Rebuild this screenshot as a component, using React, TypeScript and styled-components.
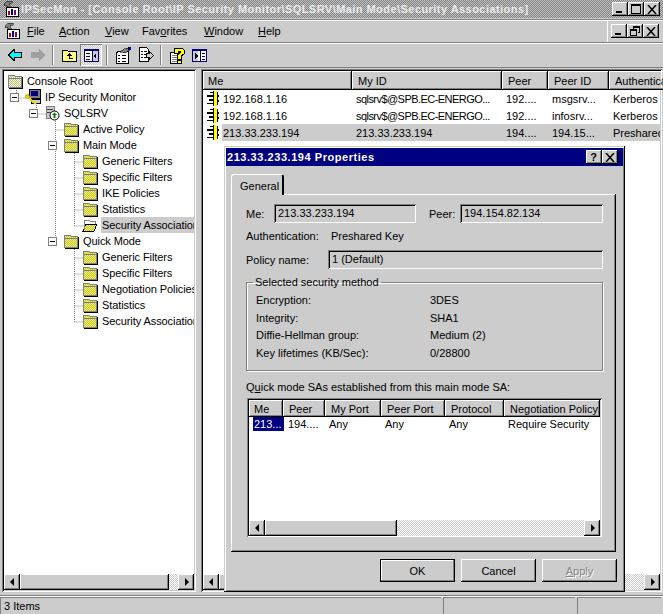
import { useId } from "react";
import styled, { createGlobalStyle, css } from "styled-components";

const GlobalStyle = createGlobalStyle`
  * { box-sizing: border-box; }
  html, body { margin: 0; padding: 0; background: #ccc; }
  body { font: 11px "Liberation Sans", Arial, sans-serif; color: #000; }
`;

const dither = (a: string, b: string) => css`
  background: repeating-conic-gradient(${a} 0 25%, ${b} 0 50%) 0 0 / 2px 2px;
`;

const raised = css`
  box-shadow: inset -1px -1px #000, inset 1px 1px #fff, inset -2px -2px #808080;
`;

const sunken = css`
  box-shadow: inset 1px 1px #808080, inset -1px -1px #fff, inset 2px 2px #000,
    inset -2px -2px #ccc;
`;

/* ---------- icons ---------- */

function Folder({ faded, open }: { faded?: boolean; open?: boolean }) {
  const id = useId();
  const fill = `url(#${id})`;
  return (
    <svg width="16" height="16" viewBox="0 0 16 16" shapeRendering="crispEdges">
      <defs>
        <pattern id={id} width="2" height="2" patternUnits="userSpaceOnUse">
          <rect width="2" height="2" fill={faded ? "#ffffc0" : "#ffff00"} />
          <rect width="1" height="1" fill="#b8b8a0" />
          <rect x="1" y="1" width="1" height="1" fill="#b8b8a0" />
        </pattern>
      </defs>
      {open ? (
        <>
          <path d="M2 3h5l1 1h5v3H2z" fill="#fff" stroke="#808080" />
          <path d="M4 7h11l-3 7H1z" fill={fill} stroke="#000" strokeWidth="1" />
          <path d="M2 13V4" stroke="#808080" />
        </>
      ) : (
        <>
          <path d="M2 2h5l1 1h6v2H1V3z" fill={fill} stroke="#808080" />
          <rect x="1" y="5" width="13" height="9" fill={fill} stroke="#808080" />
          <path d="M15 4v11H2" stroke="#000" fill="none" />
        </>
      )}
    </svg>
  );
}

function MmcIcon() {
  return (
    <svg width="16" height="16" viewBox="0 0 16 16" shapeRendering="crispEdges">
      <path d="M1 3l3-3h5v2H6v3L4 6 3 4 1 5z" fill="#808080" stroke="#000" strokeWidth=".5" />
      <rect x="5" y="5" width="3" height="9" fill="#8b5a2b" />
      <rect x="3" y="6" width="12" height="9" fill="#fff" stroke="#000" />
      <rect x="5" y="10" width="2" height="4" fill="#c00000" />
      <rect x="8" y="8" width="2" height="6" fill="#000080" />
      <rect x="11" y="9" width="2" height="5" fill="#800080" />
    </svg>
  );
}

function MonitorKey() {
  return (
    <svg width="16" height="17" viewBox="0 0 16 17">
      <rect x="4" y="0" width="11" height="9" fill="#808080" stroke="#000" shapeRendering="crispEdges" />
      <rect x="6" y="2" width="7" height="5" fill="#000080" shapeRendering="crispEdges" />
      <rect x="6" y="10" width="9" height="4" fill="#ccc" stroke="#000" shapeRendering="crispEdges" />
      <path d="M1 7l3 1 2 3 5 4" stroke="#f0d800" strokeWidth="2" fill="none" />
      <circle cx="2.5" cy="7.5" r="2" fill="#f0d800" stroke="#806000" strokeWidth=".5" />
    </svg>
  );
}

function ServerIcon() {
  return (
    <svg width="16" height="16" viewBox="0 0 16 16">
      <rect x="2" y="1" width="8" height="12" fill="#ccc" stroke="#808080" shapeRendering="crispEdges" />
      <path d="M3 4h6M3 7h6" stroke="#404040" shapeRendering="crispEdges" />
      <circle cx="10.5" cy="10.5" r="4.5" fill="#fff" stroke="#000" />
      <path d="M10.5 7.5l2.5 2.5h-1.5v3h-2v-3H8z" fill="#008000" />
    </svg>
  );
}

function SaIcon() {
  return (
    <svg width="12" height="15" viewBox="0 0 12 15" shapeRendering="crispEdges">
      <path d="M7 0h3v15H7z" fill="#ffff00" />
      <path d="M6 0h1v15H6zM10 1h1v13h-1z" fill="#000" />
      <path d="M3 1h3v1H3zM0 4h6v2H0zM2 8h4v2H2zM0 12h6v1H0zM11 4h1v2h-1zM11 9h1v2h-1z" fill="#000" />
    </svg>
  );
}

function BackIcon({ disabled }: { disabled?: boolean }) {
  return (
    <svg width="14" height="12" viewBox="0 0 14 12" shapeRendering="crispEdges">
      {disabled ? (
        <path d="M8 0l6 6-6 6V9H0V3h8z" fill="#a0a0a0" stroke="none" />
      ) : (
        <path d="M6 .5L.5 6 6 11.5V8.5h7.5v-5H6z" fill="#00ffff" stroke="#000" />
      )}
    </svg>
  );
}

function UpFolderIcon() {
  return (
    <svg width="16" height="14" viewBox="0 0 16 14" shapeRendering="crispEdges">
      <path d="M1 2h5l1 1h8v10H1z" fill="#ffff80" stroke="#000" />
      <path d="M8 5l3 3H9v2h3v1H8V8H6z" fill="#000" />
    </svg>
  );
}

function PaneIcon({ flip }: { flip?: boolean }) {
  return (
    <svg width="15" height="13" viewBox="0 0 15 13" shapeRendering="crispEdges">
      <rect x=".5" y=".5" width="14" height="12" fill="#fff" stroke="#000080" />
      <rect x="0" y="0" width="15" height="2" fill="#000080" />
      <rect x={flip ? 1 : 9} y="2" width="5" height="10" fill="#ccc" />
      <path d={flip ? "M3 4l3 3-3 3z" : "M12 4l-3 3 3 3z"} fill="#000" />
      <path
        d={flip ? "M8 2v10M10 4h3M10 7h3M10 10h3" : "M8 2v10M2 4h4M2 7h4M2 10h4"}
        stroke="#000080"
      />
    </svg>
  );
}

function PropsIcon() {
  return (
    <svg width="17" height="17" viewBox="0 0 17 17" shapeRendering="crispEdges">
      <path d="M1 6l3-2h9v12H1z" fill="#fff" stroke="#000" />
      <path d="M3 8h2M7 8h4M3 11h2M7 11h4M3 14h2M7 14h4" stroke="#000" />
      <path d="M5 5l4-3 4-1 2 2-5 3z" fill="#808080" stroke="#000" strokeWidth=".5" />
      <rect x="13" y="0" width="3" height="3" fill="#000080" />
    </svg>
  );
}

function ExportIcon() {
  return (
    <svg width="16" height="16" viewBox="0 0 16 16" shapeRendering="crispEdges">
      <path d="M1.5 .5h7l2 2v12h-9z" fill="#fff" stroke="#000" />
      <path d="M3 4h2M3 7h2M3 10h2" stroke="#000080" strokeWidth="1" />
      <path d="M6 4h3M6 7h2M6 10h2" stroke="#000" />
      <path d="M8 6.5h3V4l4.5 4.5L11 13v-2.500H8z" fill="#ccc" stroke="#000" />
    </svg>
  );
}

function HelpIcon() {
  return (
    <svg width="16" height="17" viewBox="0 0 16 17" shapeRendering="crispEdges">
      <path d="M1 5h10v11H1z" fill="#fff" stroke="#000" />
      <path d="M3 8h6M3 10h6M3 12h6M3 14h6" stroke="#808080" />
      <path
        d="M5 1h8l2 2v4l-3 2v3H8V8l3-2V4H9v2H5z"
        fill="#ffff00"
        stroke="#000"
      />
      <rect x="8" y="13" width="4" height="3" fill="#ffff00" stroke="#000" />
    </svg>
  );
}

/* ---------- main window ---------- */

const Window = styled.div`
  position: relative;
  width: 663px;
  height: 614px;
  overflow: hidden;
  background: #ccc;
  display: flex;
  flex-direction: column;
`;

const TitleBar = styled.div`
  height: 19px;
  flex: none;
  display: flex;
  align-items: center;
  padding: 0 3px 0 3px;
  ${dither("#808080", "#c4c4c4")}
  border-bottom: 1px solid #ccc;
`;

const TitleText = styled.span`
  flex: 1;
  margin-left: 2px;
  font-weight: bold;
  font-size: 11px;
  letter-spacing: 0.45px;
  color: #ececec;
  white-space: nowrap;
`;

const CaptionButton = styled.span`
  ${raised}
  width: 16px;
  height: 14px;
  background: #ccc;
  color: #000;
  display: inline-flex;
  align-items: center;
  justify-content: center;
`;

const CaptionGroup = styled.div`
  display: flex;
`;

const MenuBar = styled.div`
  height: 24px;
  flex: none;
  display: flex;
  align-items: center;
  padding: 0 4px 0 4px;
  border-top: 1px solid #808080;
  border-bottom: 1px solid #808080;
  box-shadow: inset 0 1px #fff;
`;

const MenuItem = styled.span<{ $w: number }>`
  width: ${(p) => p.$w}px;
  flex: none;
  white-space: nowrap;
`;

const MenuIconSlot = styled.span`
  width: 23px;
  height: 16px;
  flex: none;
`;

const MdiButtons = styled.div`
  margin-left: auto;
  align-self: stretch;
  display: flex;
  align-items: center;
  padding: 0 0 0 3px;
  border-left: 1px solid #fff;
`;

const ToolBar = styled.div`
  height: 25px;
  flex: none;
  display: flex;
  align-items: center;
  padding: 0 0 0 8px;
  border-bottom: 1px solid #808080;
  box-shadow: inset 0 1px #fff;
`;

const ToolButton = styled.span<{ $pressed?: boolean; $w: number }>`
  width: ${(p) => p.$w}px;
  height: 22px;
  flex: none;
  display: flex;
  align-items: center;
  ${(p) =>
    p.$pressed &&
    css`
      justify-content: center;
      ${dither("#ccc", "#eee")}
      box-shadow: inset 1px 1px #808080, inset -1px -1px #fff;
    `}
`;

const ToolSeparator = styled.span`
  width: 2px;
  height: 20px;
  flex: none;
  margin: 0 7px 0 4px;
  border-left: 1px solid #808080;
  border-right: 1px solid #fff;
`;

const Panes = styled.div`
  flex: 1;
  min-height: 0;
  display: flex;
  padding: 1px 0 3px 2px;
  gap: 5px;
  border-bottom: 1px solid #808080;
`;

const Pane = styled.div<{ $w: number }>`
  ${sunken}
  position: relative;
  width: ${(p) => p.$w}px;
  flex: none;
  background: #fff;
  padding: 2px;
  display: flex;
  flex-direction: column;
`;

/* ---------- tree ---------- */

const TreeBody = styled.div`
  flex: 1;
  min-height: 0;
  position: relative;
  overflow: hidden;
  padding-top: 2px;
`;

const TreeLines = styled.svg`
  position: absolute;
  left: -2px;
  top: -71px;
  pointer-events: none;
`;

const TreeRowWrap = styled.div<{ $level: number }>`
  position: relative;
  height: 16px;
  display: flex;
  align-items: center;
  padding-left: ${(p) => [3, 21, 40, 59, 78][p.$level]}px;
  white-space: nowrap;
`;

const TreeLabel = styled.span<{ $selected?: boolean }>`
  margin-left: 3px;
  padding: 0 1px;
  height: 16px;
  line-height: 16px;
  flex: 1;
  overflow: hidden;
  letter-spacing: -0.08px;
  background: ${(p) => (p.$selected ? "#ccc" : "transparent")};
`;

const Expander = styled.span`
  position: absolute;
  width: 9px;
  height: 9px;
  top: 4px;
  margin-left: -15px;
  background: #fff;
  border: 1px solid #808080;
  &::after {
    content: "";
    position: absolute;
    left: 1px;
    top: 3px;
    width: 5px;
    height: 1px;
    background: #000;
  }
`;

/* ---------- scroll bars ---------- */

const ScrollBarWrap = styled.div`
  height: 16px;
  flex: none;
  display: flex;
  background: #ccc;
`;

const ScrollButton = styled.span`
  ${raised}
  width: 16px;
  height: 16px;
  flex: none;
  background: #ccc;
  display: flex;
  align-items: center;
  justify-content: center;
`;

const ScrollThumb = styled.span<{ $w: number }>`
  ${raised}
  width: ${(p) => p.$w}px;
  flex: none;
  background: #ccc;
`;

const ScrollTrack = styled.span`
  flex: 1;
  ${dither("#fff", "#ccc")}
`;

const ArrowGlyph = styled.span<{ $left?: boolean }>`
  width: 0;
  height: 0;
  border-top: 4px solid transparent;
  border-bottom: 4px solid transparent;
  ${(p) =>
    p.$left
      ? "border-right: 4px solid #000; margin-left: -1px;"
      : "border-left: 4px solid #000; margin-left: 1px;"}
`;

function ScrollBar({ thumb }: { thumb: number }) {
  return (
    <ScrollBarWrap>
      <ScrollButton>
        <ArrowGlyph $left />
      </ScrollButton>
      <ScrollThumb $w={thumb} />
      <ScrollTrack />
      <ScrollButton>
        <ArrowGlyph />
      </ScrollButton>
    </ScrollBarWrap>
  );
}

/* ---------- list views ---------- */

const ListHeader = styled.div<{ $h: number }>`
  display: flex;
  flex: none;
  height: ${(p) => p.$h}px;
  line-height: ${(p) => p.$h + 1}px;
  background: #ccc;
`;

const HeaderCell = styled.div<{ $w: number }>`
  ${raised}
  width: ${(p) => p.$w}px;
  flex: none;
  padding: 0 0 0 6px;
  overflow: hidden;
  white-space: nowrap;
  &:first-child {
    padding-left: 5px;
  }
`;

const ListRow = styled.div`
  position: relative;
  height: 17px;
  display: flex;
  align-items: center;
  white-space: nowrap;
`;

const ListBody = styled.div`
  flex: 1;
  min-height: 0;
  overflow: hidden;
`;

const ListCell = styled.span<{ $w: number; $selected?: boolean; $first?: boolean; $tight?: boolean }>`
  width: ${(p) => p.$w}px;
  flex: none;
  height: 100%;
  line-height: 19px;
  padding-left: ${(p) => (p.$first ? 1 : 4)}px;
  overflow: hidden;
  letter-spacing: ${(p) => (p.$tight ? "-0.55px" : "normal")};
  background: ${(p) => (p.$selected ? "#ccc" : "transparent")};
`;

const IconCell = styled.span<{ $w: number }>`
  width: ${(p) => p.$w}px;
  flex: none;
  display: flex;
  align-items: center;
  padding-left: 4px;
`;

/* ---------- dialog ---------- */

const Dialog = styled.div`
  position: absolute;
  left: 224px;
  top: 146px;
  width: 401px;
  height: 446px;
  background: #ccc;
  padding: 2px;
  box-shadow: inset -1px -1px #000, inset 1px 1px #ccc, inset 2px 2px #fff,
    inset -2px -2px #808080;
`;

const DialogTitle = styled.div`
  height: 18px;
  background: #000080;
  color: #fff;
  font-weight: bold;
  letter-spacing: 0.55px;
  display: flex;
  align-items: center;
  padding: 0 5px 0 1px;
`;

const DialogTitleText = styled.span`
  flex: 1;
`;

const TabStrip = styled.div`
  display: flex;
  margin: 8px 0 0 5px;
  height: 20px;
`;

const Tab = styled.div`
  position: relative;
  z-index: 1;
  width: 53px;
  height: 21px;
  padding: 5px 0 0 8px;
  background: #ccc;
  border-radius: 3px 3px 0 0;
  border-left: 1px solid #fff;
  border-top: 1px solid #fff;
  border-right: 2px solid #000;
`;

const TabPage = styled.div`
  ${raised}
  width: 385px;
  height: 358px;
  margin-left: 5px;
  padding: 10px 13px 0 15px;
`;

const FieldRow = styled.div`
  display: flex;
  align-items: center;
  height: 19px;
`;

const FieldLabel = styled.span<{ $w: number; $ml?: number }>`
  width: ${(p) => p.$w}px;
  margin-left: ${(p) => p.$ml ?? 0}px;
  flex: none;
`;

const ReadOnlyField = styled.div<{ $w: number }>`
  ${sunken}
  width: ${(p) => p.$w}px;
  height: 19px;
  padding: 0 0 0 4px;
  line-height: 19px;
  flex: none;
  white-space: nowrap;
`;

const InfoRow = styled.div`
  display: flex;
  height: 16px;
  line-height: 16px;
  margin: 5px 0 6px;
`;

const GroupBox = styled.fieldset`
  margin: 6px 0 0;
  padding: 3px 0 0 9px;
  min-width: 0;
  height: 96px;
  width: 357px;
  border: 1px solid #808080;
  box-shadow: 1px 1px #fff, inset 1px 1px #fff;
`;

const GroupLegend = styled.legend`
  padding: 0 2px;
  margin-left: -3px;
  line-height: 14px;
`;

const MethodGrid = styled.div`
  display: grid;
  grid-template-columns: 174px 1fr;
  grid-auto-rows: 17.5px;
  line-height: 17.5px;
`;

const QuickLabel = styled.div`
  margin-top: 9px;
  height: 14px;
  line-height: 14px;
`;

const InnerList = styled.div`
  ${sunken}
  margin: 4px 0 0 1px;
  width: 355px;
  height: 139px;
  padding: 2px 2px 1px;
  background: #fff;
  display: flex;
  flex-direction: column;
`;

const InnerRow = styled.div`
  display: flex;
  height: 14px;
  line-height: 14px;
  white-space: nowrap;
`;

const InnerCell = styled.span<{ $w: number; $selected?: boolean }>`
  width: ${(p) => p.$w}px;
  flex: none;
  padding-left: ${(p) => (p.$selected ? 1 : 4)}px;
  overflow: hidden;
  ${(p) =>
    p.$selected &&
    css`
      background: #000080;
      color: #fff;
      margin-left: 4px;
    `}
`;

const ButtonRow = styled.div`
  display: flex;
  justify-content: flex-end;
  gap: 6px;
  margin-top: 7px;
  padding-right: 6px;
`;

const DialogButton = styled.button<{ $default?: boolean }>`
  width: 75px;
  height: 23px;
  padding: 0;
  border: none;
  background: #ccc;
  font: 11px "Liberation Sans", Arial, sans-serif;
  color: ${(p) => (p.disabled ? "#808080" : "#000")};
  text-shadow: ${(p) => (p.disabled ? "1px 1px #fff" : "none")};
  box-shadow: ${(p) =>
    p.$default
      ? "inset 0 0 0 1px #000, inset -2px -2px #808080, inset 2px 2px #fff"
      : "inset -1px -1px #000, inset 1px 1px #fff, inset -2px -2px #808080"};
`;

const StatusBar = styled.div`
  height: 18px;
  flex: none;
  display: flex;
  border-top: 1px solid #fff;
`;

const StatusCell = styled.div<{ $w?: number }>`
  width: ${(p) => (p.$w ? `${p.$w}px` : "auto")};
  flex: ${(p) => (p.$w ? "none" : 1)};
  margin-right: 2px;
  padding-left: 3px;
  line-height: 17px;
  border-top: 1px solid #808080;
  border-left: 1px solid #808080;
`;

/* ---------- data ---------- */

const treeRows: {
  label: string;
  level: number;
  icon: "root" | "monitor" | "server" | "folder" | "open";
  expander?: boolean;
  selected?: boolean;
}[] = [
  { label: "Console Root", level: 0, icon: "root" },
  { label: "IP Security Monitor", level: 1, icon: "monitor", expander: true },
  { label: "SQLSRV", level: 2, icon: "server", expander: true },
  { label: "Active Policy", level: 3, icon: "folder" },
  { label: "Main Mode", level: 3, icon: "folder", expander: true },
  { label: "Generic Filters", level: 4, icon: "folder" },
  { label: "Specific Filters", level: 4, icon: "folder" },
  { label: "IKE Policies", level: 4, icon: "folder" },
  { label: "Statistics", level: 4, icon: "folder" },
  { label: "Security Associations", level: 4, icon: "open", selected: true },
  { label: "Quick Mode", level: 3, icon: "folder", expander: true },
  { label: "Generic Filters", level: 4, icon: "folder" },
  { label: "Specific Filters", level: 4, icon: "folder" },
  { label: "Negotiation Policies", level: 4, icon: "folder" },
  { label: "Statistics", level: 4, icon: "folder" },
  { label: "Security Associations", level: 4, icon: "folder" },
];

const saColumns = [
  { title: "Me", w: 149 },
  { title: "My ID", w: 150 },
  { title: "Peer", w: 46 },
  { title: "Peer ID", w: 61 },
  { title: "Authentication", w: 60 },
];

const saRows = [
  ["192.168.1.16", "sqlsrv$@SPB.EC-ENERGO...", "192....", "msgsrv...", "Kerberos"],
  ["192.168.1.16", "sqlsrv$@SPB.EC-ENERGO...", "192....", "infosrv...", "Kerberos"],
  ["213.33.233.194", "213.33.233.194", "194....", "194.15...", "Preshared Key"],
];

const quickColumns = [
  { title: "Me", w: 34 },
  { title: "Peer", w: 42 },
  { title: "My Port", w: 56 },
  { title: "Peer Port", w: 64 },
  { title: "Protocol", w: 59 },
  { title: "Negotiation Policy", w: 96 },
];

const methodRows = [
  ["Encryption:", "3DES"],
  ["Integrity:", "SHA1"],
  ["Diffie-Hellman group:", "Medium (2)"],
  ["Key lifetimes (KB/Sec):", "0/28800"],
];

function TreeIcon({ icon }: { icon: string }) {
  if (icon === "monitor") return <MonitorKey />;
  if (icon === "server") return <ServerIcon />;
  if (icon === "open") return <Folder open />;
  return <Folder faded={icon === "root"} />;
}

const GlyphMin = () => (
  <svg width="8" height="8" viewBox="0 0 8 8" shapeRendering="crispEdges">
    <path d="M0 6h6v2H0z" fill="#000" />
  </svg>
);
const GlyphMax = () => (
  <svg width="10" height="10" viewBox="0 0 10 10" shapeRendering="crispEdges">
    <path d="M.5 .5h9v9h-9zM0 1.5h10" fill="none" stroke="#000" />
  </svg>
);
const GlyphRestore = () => (
  <svg width="10" height="10" viewBox="0 0 10 10" shapeRendering="crispEdges">
    <path d="M3.5 2.5V.5h6v6h-2M.5 3.5h6v6h-6zM.5 4.5h6M3 1.5h6" fill="none" stroke="#000" />
  </svg>
);
const GlyphClose = () => (
  <svg width="10" height="9" viewBox="0 0 10 9">
    <path d="M1 0l8 9M9 0l-8 9" stroke="#000" strokeWidth="1.5" />
  </svg>
);

export default function App() {
  return (
    <Window>
      <GlobalStyle />
      <TitleBar>
        <MmcIcon />
        <TitleText>
          IPSecMon - [Console Root\IP Security Monitor\SQLSRV\Main Mode\Security Associations]
        </TitleText>
        <CaptionGroup>
          <CaptionButton><GlyphMin /></CaptionButton>
          <CaptionButton><GlyphMax /></CaptionButton>
          <CaptionButton><GlyphClose /></CaptionButton>
        </CaptionGroup>
      </TitleBar>

      <MenuBar>
        <MenuIconSlot><MmcIcon /></MenuIconSlot>
        <MenuItem $w={32}><u>F</u>ile</MenuItem>
        <MenuItem $w={46}><u>A</u>ction</MenuItem>
        <MenuItem $w={37}><u>V</u>iew</MenuItem>
        <MenuItem $w={62}>Fav<u>o</u>rites</MenuItem>
        <MenuItem $w={54}><u>W</u>indow</MenuItem>
        <MenuItem $w={30}><u>H</u>elp</MenuItem>
        <MdiButtons>
          <CaptionButton><GlyphMin /></CaptionButton>
          <CaptionButton><GlyphRestore /></CaptionButton>
          <CaptionButton><GlyphClose /></CaptionButton>
        </MdiButtons>
      </MenuBar>

      <ToolBar>
        <ToolButton $w={23}><BackIcon /></ToolButton>
        <ToolButton $w={17}><BackIcon disabled /></ToolButton>
        <ToolSeparator />
        <ToolButton $w={19}><UpFolderIcon /></ToolButton>
        <ToolButton $pressed $w={22}><PaneIcon /></ToolButton>
        <ToolSeparator />
        <ToolButton $w={23}><PropsIcon /></ToolButton>
        <ToolButton $w={18}><ExportIcon /></ToolButton>
        <ToolSeparator />
        <ToolButton $w={23}><HelpIcon /></ToolButton>
        <ToolButton $w={23}><PaneIcon flip /></ToolButton>
      </ToolBar>

      <Panes>
        <Pane $w={194}>
          <TreeBody>
            <TreeLines width="196" height="530">
              <path
                d="M14.5 88v10M14.5 98h10M34.5 105v9M34.5 114h10M53.5 121v121M53.5 130h9M72.5 153v73M72.5 162h9M72.5 178h9M72.5 194h9M72.5 210h9M72.5 226h9M72.5 249v73M72.5 258h9M72.5 274h9M72.5 290h9M72.5 306h9M72.5 322h9"
                stroke="#808080"
                strokeDasharray="1 1"
                fill="none"
              />
            </TreeLines>
            {treeRows.map((row, i) => (
              <TreeRowWrap key={i} $level={row.level}>
                {row.expander && <Expander />}
                <TreeIcon icon={row.icon} />
                <TreeLabel $selected={row.selected}>{row.label}</TreeLabel>
              </TreeRowWrap>
            ))}
          </TreeBody>
          <ScrollBar thumb={149} />
        </Pane>

        <Pane $w={461}>
          <ListHeader $h={19}>
            {saColumns.map((c) => (
              <HeaderCell key={c.title} $w={c.w}>{c.title}</HeaderCell>
            ))}
          </ListHeader>
          <ListBody>
            {saRows.map((row, i) => (
              <ListRow key={i}>
                <IconCell $w={19}><SaIcon /></IconCell>
                {row.map((text, j) => (
                  <ListCell
                    key={j}
                    $w={j === 0 ? saColumns[0].w - 19 : saColumns[j].w}
                    $selected={i === 2}
                    $first={j === 0}
                    $tight={j === 1 && i < 2}
                  >
                    {text}
                  </ListCell>
                ))}
              </ListRow>
            ))}
          </ListBody>
          <ScrollBar thumb={200} />
        </Pane>
      </Panes>

      <StatusBar>
        <StatusCell $w={441}>3 Items</StatusCell>
        <StatusCell $w={132} />
        <StatusCell />
      </StatusBar>

      <Dialog>
        <DialogTitle>
          <DialogTitleText>213.33.233.194 Properties</DialogTitleText>
          <CaptionButton>?</CaptionButton>
          <CaptionButton><GlyphClose /></CaptionButton>
        </DialogTitle>
        <TabStrip>
          <Tab>General</Tab>
        </TabStrip>
        <TabPage>
          <FieldRow>
            <FieldLabel $w={28}>Me:</FieldLabel>
            <ReadOnlyField $w={142}>213.33.233.194</ReadOnlyField>
            <FieldLabel $w={31} $ml={13}>Peer:</FieldLabel>
            <ReadOnlyField $w={143}>194.154.82.134</ReadOnlyField>
          </FieldRow>
          <InfoRow>
            <FieldLabel $w={85}>Authentication:</FieldLabel>
            <span>Preshared Key</span>
          </InfoRow>
          <FieldRow>
            <FieldLabel $w={82}>Policy name:</FieldLabel>
            <ReadOnlyField $w={275}>1 (Default)</ReadOnlyField>
          </FieldRow>
          <GroupBox>
            <GroupLegend>Selected security method</GroupLegend>
            <MethodGrid>
              {methodRows.flat().map((text) => (
                <span key={text}>{text}</span>
              ))}
            </MethodGrid>
          </GroupBox>
          <QuickLabel>
            Q<u>u</u>ick mode SAs established from this main mode SA:
          </QuickLabel>
          <InnerList>
            <ListHeader $h={17}>
              {quickColumns.map((c) => (
                <HeaderCell key={c.title} $w={c.w}>{c.title}</HeaderCell>
              ))}
            </ListHeader>
            <ListBody>
              <InnerRow>
                <InnerCell $w={31} $selected>213...</InnerCell>
                <InnerCell $w={41}>194....</InnerCell>
                <InnerCell $w={56}>Any</InnerCell>
                <InnerCell $w={64}>Any</InnerCell>
                <InnerCell $w={59}>Any</InnerCell>
                <InnerCell $w={96}>Require Security</InnerCell>
              </InnerRow>
            </ListBody>
            <ScrollBar thumb={132} />
          </InnerList>
        </TabPage>
        <ButtonRow>
          <DialogButton $default>OK</DialogButton>
          <DialogButton>Cancel</DialogButton>
          <DialogButton disabled><u>A</u>pply</DialogButton>
        </ButtonRow>
      </Dialog>
    </Window>
  );
}
